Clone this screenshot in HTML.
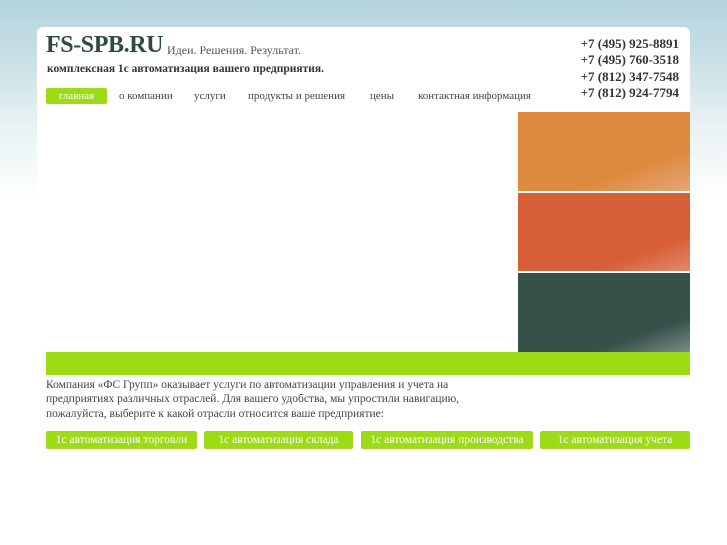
<!DOCTYPE html>
<html style="background:#fff"><head><meta charset="utf-8"><style>
html,body{margin:0;width:727px;height:545px;overflow:hidden}
body{background:linear-gradient(#b3d3de 0,#c9e0e6 60px,#e6f0f2 120px,#fff 200px) no-repeat;background-size:727px 545px;font-family:"Liberation Serif",serif;position:relative}
.c{position:absolute;left:37px;top:27px;width:653px;height:530px;background:#fff;border-radius:6px}
.a{position:absolute}
.logo{left:46px;top:32px;font-size:24px;font-weight:bold;color:#2f4a44;letter-spacing:-0.4px}
.tag{left:167px;top:43px;font-size:12px;color:#555}
.sub{left:47px;top:63px;font-size:11.5px;font-weight:bold;color:#333}
.ph{right:48px;top:36px;font-size:13px;font-weight:bold;color:#333;text-align:right;line-height:16.3px}
.nav{top:88px;font-size:11px;color:#444;height:16px;line-height:16px}
.t{left:518px;width:172px;height:79px}
.bar{left:46px;top:352px;width:644px;height:23px;background:#9ddc14}
.txt{left:46px;top:378px;font-size:11.5px;color:#444;line-height:14.3px;white-space:nowrap}
.b{top:431px;height:18px;line-height:18px;background:#9ddc14;color:#fff;font-size:11.5px;text-align:center;border-radius:2px}
</style></head><body>
<div class="c"></div>
<div class="a logo">FS-SPB.RU</div>
<div class="a tag">Идеи. Решения. Результат.</div>
<div class="a sub">комплексная 1с автоматизация вашего предприятия.</div>
<div class="a ph">+7 (495) 925-8891<br>&nbsp;+7 (495) 760-3518<br>+7 (812) 347-7548<br>+7 (812) 924-7794</div>
<div class="a nav" style="left:46px;width:61px;background:#9ddc14;color:#fff;text-align:center;border-radius:2px">главная</div>
<div class="a nav" style="left:119px">о компании</div>
<div class="a nav" style="left:194px">услуги</div>
<div class="a nav" style="left:248px">продукты и решения</div>
<div class="a nav" style="left:370px">цены</div>
<div class="a nav" style="left:418px">контактная информация</div>
<div class="a t" style="top:112px;background:linear-gradient(160deg,#dd8a3e 70%,#e6a577)"></div>
<div class="a t" style="top:193px;height:78px;background:linear-gradient(160deg,#d75f38 75%,#e08a6e)"></div>
<div class="a t" style="top:273px;background:linear-gradient(160deg,#36504a 75%,#7d8d89)"></div>
<div class="a bar"></div>
<div class="a txt">Компания «ФС Групп» оказывает услуги по автоматизации управления и учета на<br>предприятиях различных отраслей. Для вашего удобства, мы упростили навигацию,<br>пожалуйста, выберите к какой отрасли относится ваше предприятие:</div>
<div class="a b" style="left:46px;width:151px">1с автоматизация торговли</div>
<div class="a b" style="left:204px;width:149px">1с автоматизация склада</div>
<div class="a b" style="left:361px;width:172px">1с автоматизация производства</div>
<div class="a b" style="left:540px;width:150px">1с автоматизация учета</div>
</body></html>
